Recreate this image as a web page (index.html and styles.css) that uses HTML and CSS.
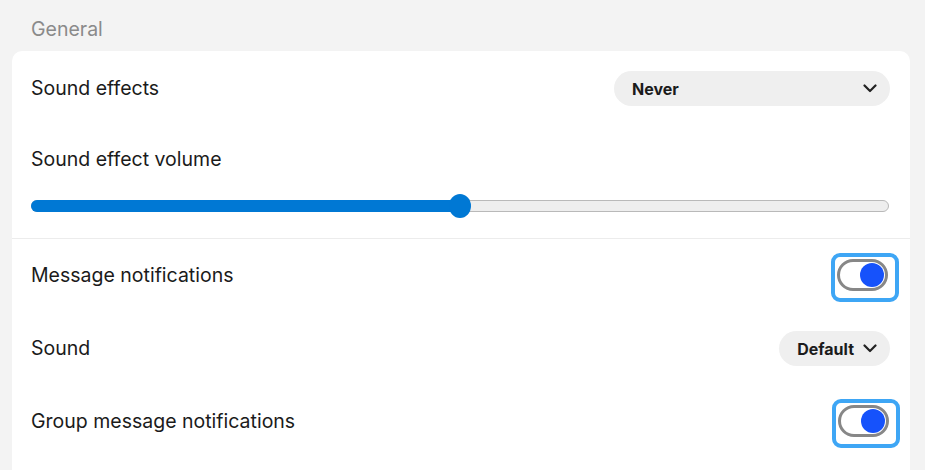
FILE: index.html
```html
<html>
<head>
    <title>Settings</title>
    <link rel="stylesheet" href="styles.css">
</head>
<body>
    <div class="section">
        <h2 class="section-title">General</h2>
        <div class="card">
            <div class="row">
                <span class="label">Sound effects</span>
                <div class="select wide">
                    <span>Never</span>
                    <svg class="chev" width="14" height="9" viewBox="0 0 14 9"><path d="M1.5 1.5 L7 7 L12.5 1.5" fill="none" stroke="#222" stroke-width="2.2" stroke-linecap="round" stroke-linejoin="round"/></svg>
                </div>
            </div>
            <div class="volume">
                <span class="label">Sound effect volume</span>
                <div class="slider">
                    <div class="fill" style="width: 50%"></div>
                    <div class="thumb" style="left: 50%"></div>
                </div>
            </div>
            <div class="row sep">
                <span class="label">Message notifications</span>
                <div class="toggle focused"><div class="knob"></div></div>
            </div>
            <div class="row">
                <span class="label">Sound</span>
                <div class="select">
                    <span>Default</span>
                    <svg class="chev" width="14" height="9" viewBox="0 0 14 9"><path d="M1.5 1.5 L7 7 L12.5 1.5" fill="none" stroke="#222" stroke-width="2.2" stroke-linecap="round" stroke-linejoin="round"/></svg>
                </div>
            </div>
            <div class="row">
                <span class="label">Group message notifications</span>
                <div class="toggle focused"><div class="knob"></div></div>
            </div>
        </div>
    </div>
</body>
</html>
```

FILE: styles.css
```css
*{
    margin: 0;
    box-sizing: border-box;
}
body{
    background-color: #f3f3f3;
    font-family: Inter, "Noto Sans", sans-serif;
    color: #1b1b1b;
}
.section{
    padding: 0 15px 0 12px;
}
.section-title{
    font-size: 19.5px;
    font-weight: 400;
    color: #8a8a8a;
    padding: 17px 0 0 19px;
    height: 51px;
}
.card{
    background-color: white;
    border-radius: 10px;
    padding: 0 20px 20px 19px;
    height: 440px;
}
.label{
    font-size: 19.5px;
}
.row{
    height: 73px;
    display: flex;
    align-items: center;
    justify-content: space-between;
}
.sep{
    border-top: 1px solid #ececec;
    margin: 0 -20px 0 -19px;
    padding: 0 21px 0 19px;
}
.select{
    height: 35px;
    border-radius: 18px;
    background-color: #efefef;
    display: flex;
    align-items: center;
    justify-content: space-between;
    padding: 0 13px 0 18px;
    font-size: 16px;
    font-weight: 700;
    gap: 9px;
    margin-top: 2px;
}
.select.wide{
    width: 276px;
}
.volume{
    height: 114px;
    padding-top: 23px;
}
.slider{
    position: relative;
    height: 12px;
    margin-top: 29px;
    margin-right: 1px;
    border: 1px solid #b9b9b9;
    background-color: #eeeeee;
    border-radius: 6px;
}
.fill{
    position: absolute;
    left: -1px;
    top: -1px;
    bottom: -1px;
    background-color: #0078d4;
    border-radius: 6px 0 0 6px;
}
.thumb{
    position: absolute;
    top: -7px;
    width: 22px;
    height: 24px;
    margin-left: -11px;
    border-radius: 50%;
    background-color: #0078d4;
}
.toggle{
    position: relative;
    width: 51px;
    height: 32px;
    margin-right: 1px;
    border: 3px solid #878787;
    border-radius: 16px;
    background-color: white;
    display: flex;
    align-items: center;
    justify-content: flex-end;
    padding-right: 1px;
}
/* keyboard focus ring drawn over the switch */
.focused::after{
    content: "";
    position: absolute;
    left: -9px;
    top: -9px;
    right: -14px;
    bottom: -14px;
    border: 4px solid #3ea6f5;
    border-radius: 9px;
}
.knob{
    width: 24px;
    height: 24px;
    border-radius: 50%;
    background-color: #1652fb;
}
```
